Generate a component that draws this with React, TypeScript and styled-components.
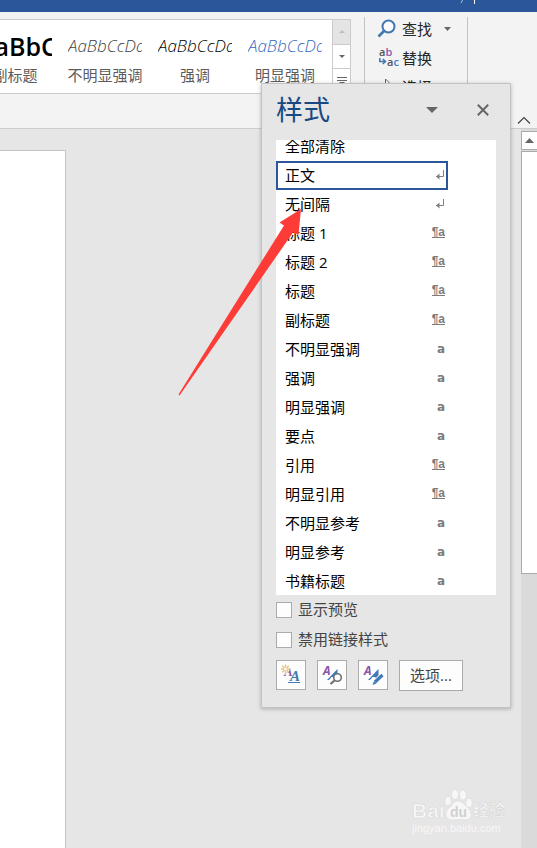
import React, { useState } from "react";
import styled, { createGlobalStyle } from "styled-components";

const uiFont = `"Open Sans", "Noto Sans CJK SC", sans-serif`;

const GlobalStyle = createGlobalStyle`
  *, *::before, *::after { box-sizing: border-box; }
  body {
    margin: 0;
    overflow: hidden;
    background: #e6e6e6;
    font-family: ${uiFont};
    font-size: 15px;
    color: #262626;
  }
  button, input { font: inherit; color: inherit; }
  button { padding: 0; border: 0; background: none; cursor: pointer; }
  svg { display: block; }
`;

const Window = styled.div`
  position: relative;
  display: flex;
  flex-direction: column;
  height: 100vh;
  overflow: hidden;
`;

const TitleBar = styled.header`
  flex: none;
  display: flex;
  justify-content: flex-end;
  height: 12px;
  padding-right: 61px;
  background: #2b579a;
`;

const Ribbon = styled.div`
  flex: none;
  display: flex;
  align-items: flex-start;
  height: 117px;
  background: #f3f3f3;
  border-bottom: 1px solid #cdcdcd;
`;

const Gallery = styled.div`
  flex: none;
  display: flex;
  justify-content: flex-end;
  width: 351px;
  height: 75px;
  margin-top: 7px;
  overflow: hidden;
  background: #fff;
  border: solid #cbcbcb;
  border-width: 1px 1px 1px 0;
`;

const GalleryItem = styled.button`
  flex: none;
  width: 90px;
  height: 73px;
  display: flex;
  flex-direction: column;
  align-items: center;
  color: #5c5c5c;
`;

const Sample = styled.span<{ $tone: string; $heading?: boolean }>`
  width: 74px;
  height: 36px;
  margin-top: 8px;
  overflow: hidden;
  white-space: nowrap;
  text-align: left;
  line-height: 36px;
  color: ${(p) => p.$tone};
  font-family: "Open Sans", sans-serif;
  font-size: ${(p) => (p.$heading ? 25 : 17)}px;
  font-weight: ${(p) => (p.$heading ? 600 : 300)};
  font-style: ${(p) => (p.$heading ? "normal" : "italic")};
`;

const SampleName = styled.span`
  line-height: 22px;
  white-space: nowrap;
`;

const GalleryScroll = styled.div`
  flex: none;
  display: flex;
  flex-direction: column;
  width: 18px;
  margin-left: 2px;
  border-left: 1px solid #cbcbcb;
`;

const ScrollStep = styled.button<{ $off?: boolean }>`
  flex: 1;
  display: grid;
  place-items: center;
  background: ${(p) => (p.$off ? "#e4e4e4" : "#fff")};
  & + & { border-top: 1px solid #cbcbcb; }
`;

const EditGroup = styled.div`
  flex: none;
  display: flex;
  flex-direction: column;
  gap: 5px;
  width: 104px;
  height: 80px;
  margin: 5px 0 0 13px;
  padding: 0 12px;
  border: solid #c3c3c3;
  border-width: 0 1px;
`;

const EditCommand = styled.button`
  display: grid;
  grid-template-columns: 25px 30px 30px;
  align-items: center;
  height: 24px;
  line-height: 24px;
  text-align: left;
  svg:last-child { justify-self: center; }
`;

const CollapseButton = styled.button`
  align-self: flex-end;
  margin: 0 6px 3px auto;
`;

const Workspace = styled.main`
  flex: 1;
  display: flex;
  justify-content: space-between;
  background: #e6e6e6;
`;

const Page = styled.div`
  width: 66px;
  margin-top: 21px;
  background: #fff;
  border: solid #c4c4c4;
  border-width: 1px 1px 0 0;
`;

const ScrollBar = styled.div`
  display: flex;
  flex-direction: column;
  width: 16px;
  padding-top: 2px;
  background: #dadada;
`;

const ScrollUp = styled.button`
  display: grid;
  place-items: center;
  height: 19px;
  background: #fff;
  border: solid #ababab;
  border-width: 1px 0 1px 1px;
`;

const Thumb = styled.div`
  height: 59%;
  margin-top: 1px;
  background: #fff;
  border: solid #ababab;
  border-width: 1px 0 1px 1px;
`;

const Pane = styled.aside`
  position: absolute;
  top: 83px;
  right: 26px;
  width: 250px;
  padding: 0 14px 16px;
  background: #e6e6e6;
  border: 1px solid #c3c3c3;
  box-shadow: 0 1px 4px rgba(0, 0, 0, 0.25);
`;

const PaneHeader = styled.div`
  display: flex;
  align-items: center;
  height: 56px;
  padding: 0 5px 4px 0;
`;

const PaneTitle = styled.h2`
  flex: 1;
  margin: 0;
  font-size: 27px;
  line-height: 40px;
  font-weight: 400;
  color: #174a84;
`;

const PaneTool = styled.button`
  display: grid;
  place-items: center;
  width: 16px;
  height: 16px;
  & + & { margin-left: 35px; }
`;

const StyleList = styled.ul`
  margin: 0;
  padding: 0;
  list-style: none;
  background: #fff;
`;

const StyleEntry = styled.li<{ $cut?: boolean }>`
  display: flex;
  align-items: flex-end;
  height: ${(p) => (p.$cut ? 21 : 29)}px;
  overflow: hidden;
  &:last-child { height: 28px; align-items: flex-start; }
`;

const StyleButton = styled.button<{ $on: boolean }>`
  flex: none;
  display: flex;
  align-items: center;
  justify-content: space-between;
  width: 172px;
  height: 29px;
  padding: 0 1px 2px 7px;
  line-height: 22px;
  text-align: left;
  color: #000;
  border: 2px solid ${(p) => (p.$on ? "#2b579a" : "transparent")};
  outline: none;
`;

const Mark = styled.span<{ $linked?: boolean }>`
  font-family: ${(p) => (p.$linked ? `"Liberation Sans"` : `"DejaVu Sans"`)}, sans-serif;
  font-weight: 700;
  color: #7c7c7c;
  font-size: 12px;
  line-height: ${(p) => (p.$linked ? 10 : 16)}px;
  border-bottom: ${(p) => (p.$linked ? "1px solid #7c7c7c" : "0")};
`;

const Check = styled.label`
  display: flex;
  align-items: center;
  gap: 6px;
  height: 30px;
  line-height: 22px;
  color: #444;
`;

const CheckText = styled.span`
  padding-bottom: 2px;
`;

const CheckBox = styled.input`
  appearance: none;
  width: 16px;
  height: 16px;
  margin: 0;
  background: #fdfdfd;
  border: 1px solid #ababab;
  &:checked { background: #2b579a; }
`;

const Actions = styled.div`
  display: flex;
  gap: 11px;
  margin-top: 5px;
`;

const ActionButton = styled.button<{ $wide?: boolean }>`
  display: grid;
  place-items: center;
  width: ${(p) => (p.$wide ? 64 : 30)}px;
  height: ${(p) => (p.$wide ? 31 : 30)}px;
  padding-bottom: ${(p) => (p.$wide ? 2 : 0)}px;
  line-height: 22px;
  background: #fdfdfd;
  border: 1px solid #ababab;
  color: #444;
`;

const Pointer = styled.svg`
  position: absolute;
  top: 209px;
  right: 235px;
  pointer-events: none;
`;

const Watermark = styled.div`
  position: absolute;
  right: 29px;
  bottom: 11px;
  width: 96px;
  opacity: 0.7;
`;

const Down = ({ w, h, fill }: { w: number; h: number; fill: string }) => (
  <svg width={w} height={h} viewBox="0 0 10 5" preserveAspectRatio="none">
    <path d="M0 0H10L5 5Z" fill={fill} />
  </svg>
);

const Up = ({ w, h, fill }: { w: number; h: number; fill: string }) => (
  <svg width={w} height={h} viewBox="0 0 10 5" preserveAspectRatio="none">
    <path d="M0 5H10L5 0Z" fill={fill} />
  </svg>
);

const SearchIcon = () => (
  <svg width="20" height="20" viewBox="0 0 20 20" fill="none" stroke="#4177ae">
    <circle cx="11.5" cy="7.5" r="6" strokeWidth="2" fill="#fafcff" />
    <path d="M7 12L1.5 17.5" strokeWidth="2.6" />
  </svg>
);

const ReplaceIcon = () => (
  <svg width="21" height="22" viewBox="0 0 21 22" fontFamily="Open Sans" fontWeight="600" fontSize="11">
    <text x="0" y="9" fill="#555">a<tspan fill="#9457ad">b</tspan></text>
    <text x="8" y="19" fill="#555">a<tspan fill="#4480bd">c</tspan></text>
    <path d="M.8 11V14.5H6M3.8 12L6.5 14.5L3.8 17" fill="none" stroke="#3b78b8" strokeWidth="1.5" />
  </svg>
);

const SelectIcon = () => (
  <svg width="20" height="20" viewBox="0 0 20 20">
    <path d="M5.500 2V16L9 12.500L11.500 18L13.500 17L11 11.500H15Z" fill="#fff" stroke="#666" />
  </svg>
);

const ReturnIcon = () => (
  <svg width="10" height="10" viewBox="0 0 10 10" fill="none" stroke="#7f7f7f">
    <path d="M8.500 0V6.500H1" />
    <path d="M4.500 3.500V9.500L1 6.500Z" fill="#7f7f7f" stroke="none" />
  </svg>
);

const NewStyleIcon = () => (
  <svg width="22" height="22" viewBox="0 0 22 22" fontFamily="Liberation Serif" fontStyle="italic" fontWeight="700">
    <text x="4" y="12" fontSize="13" fill="#8b55a8">A</text>
    <circle cx="5.500" cy="5" r="4" fill="#fdfdfd" />
    <path d="M5.500 .5V9.500M1 5H10M2.300 1.800L8.700 8.200M8.700 1.800L2.300 8.200" stroke="#ecc07c" strokeWidth="1.300" />
    <circle cx="5.500" cy="5" r="1.500" fill="#fff" />
    <text x="10" y="17" fontSize="15" fill="#3f79b6">A</text>
    <path d="M8 18.500H20" stroke="#3f79b6" />
  </svg>
);

const LetterPair = () => (
  <>
    <text x="2" y="11" fontSize="12" fill="#8b55a8">A</text>
    <path d="M6 16L16.500 5V16H13.500V13H10.500L8 16Z" fill="#3f79b6" />
  </>
);

const InspectIcon = () => (
  <svg width="22" height="22" viewBox="0 0 22 22" fontFamily="Open Sans" fontStyle="italic" fontWeight="700">
    <LetterPair />
    <circle cx="16.500" cy="13.500" r="3.800" fill="#fdfdfd" stroke="#707070" strokeWidth="1.600" />
    <path d="M13.500 16.500L9.500 20" stroke="#707070" strokeWidth="2.200" />
  </svg>
);

const ManageIcon = () => (
  <svg width="22" height="22" viewBox="0 0 22 22" fontFamily="Open Sans" fontStyle="italic" fontWeight="700">
    <LetterPair />
    <path d="M20.500 11L11.500 19.500" stroke="#fdfdfd" strokeWidth="5" />
    <path d="M20.500 11L13 18" stroke="#3f79b6" strokeWidth="3.200" />
    <path d="M12 17L10.500 21L14.500 19.500Z" fill="#3f79b6" />
  </svg>
);

const samples = [
  { text: "AaBbC", name: "副标题", tone: "#000", heading: true },
  { text: "AaBbCcDd", name: "不明显强调", tone: "#404040" },
  { text: "AaBbCcDd", name: "强调", tone: "#000" },
  { text: "AaBbCcDd", name: "明显强调", tone: "#3569c0" },
];

type Kind = "none" | "para" | "linked" | "char";

const styleRows: [string, Kind][] = [
  ["全部清除", "none"],
  ["正文", "para"],
  ["无间隔", "para"],
  ["标题 1", "linked"],
  ["标题 2", "linked"],
  ["标题", "linked"],
  ["副标题", "linked"],
  ["不明显强调", "char"],
  ["强调", "char"],
  ["明显强调", "char"],
  ["要点", "char"],
  ["引用", "linked"],
  ["明显引用", "linked"],
  ["不明显参考", "char"],
  ["明显参考", "char"],
  ["书籍标题", "char"],
];

const KindMark = ({ kind }: { kind: Kind }) => {
  if (kind === "para") return <ReturnIcon />;
  if (kind === "linked") return <Mark $linked>¶a</Mark>;
  if (kind === "char") return <Mark>a</Mark>;
  return null;
};

export default function App() {
  const [active, setActive] = useState("正文");
  return (
    <Window>
      <GlobalStyle />
      <TitleBar>
        <svg width="16" height="12" viewBox="0 0 16 12" stroke="#fff">
          <path d="M2.500 0L1 3" stroke="#a9bddb" />
          <path d="M14.500 0V4" />
        </svg>
      </TitleBar>
      <Ribbon>
        <Gallery>
          {samples.map((s) => (
            <GalleryItem key={s.name}>
              <Sample $tone={s.tone} $heading={s.heading}>{s.text}</Sample>
              <SampleName>{s.name}</SampleName>
            </GalleryItem>
          ))}
          <GalleryScroll>
            <ScrollStep $off aria-label="上一行"><Up w={6} h={3} fill="#bdbdbd" /></ScrollStep>
            <ScrollStep aria-label="下一行"><Down w={6} h={3} fill="#666" /></ScrollStep>
            <ScrollStep aria-label="其他">
              <svg width="10" height="10" viewBox="0 0 10 10">
                <path d="M0 1.500H10M0 4.500H10" stroke="#666" />
                <path d="M2 6H8L5 9Z" fill="#666" />
              </svg>
            </ScrollStep>
          </GalleryScroll>
        </Gallery>
        <EditGroup>
          <EditCommand><SearchIcon />查找<Down w={7} h={4} fill="#666" /></EditCommand>
          <EditCommand><ReplaceIcon />替换</EditCommand>
          <EditCommand><SelectIcon />选择</EditCommand>
        </EditGroup>
        <CollapseButton aria-label="折叠功能区">
          <svg width="14" height="9" viewBox="0 0 14 9">
            <path d="M1 7.500L7 1.500L13 7.500" fill="none" stroke="#444" strokeWidth="1.200" />
          </svg>
        </CollapseButton>
      </Ribbon>
      <Workspace>
        <Page />
        <ScrollBar>
          <ScrollUp aria-label="向上滚动"><Up w={9} h={5} fill="#666" /></ScrollUp>
          <Thumb />
        </ScrollBar>
      </Workspace>

      <Pane>
        <PaneHeader>
          <PaneTitle>样式</PaneTitle>
          <PaneTool aria-label="任务窗格选项"><Down w={12} h={6} fill="#666" /></PaneTool>
          <PaneTool aria-label="关闭">
            <svg width="12" height="12" viewBox="0 0 12 12">
              <path d="M.8 .8L11.200 11.200M11.200 .8L.8 11.200" stroke="#666" strokeWidth="2" />
            </svg>
          </PaneTool>
        </PaneHeader>
        <StyleList>
          {styleRows.map(([name, kind], i) => (
            <StyleEntry key={name} $cut={i === 0}>
              <StyleButton $on={name === active} aria-pressed={name === active} onClick={() => setActive(name)}>
                {name}
                <KindMark kind={kind} />
              </StyleButton>
            </StyleEntry>
          ))}
        </StyleList>
        <Check><CheckBox type="checkbox" /><CheckText>显示预览</CheckText></Check>
        <Check><CheckBox type="checkbox" /><CheckText>禁用链接样式</CheckText></Check>
        <Actions>
          <ActionButton aria-label="新建样式"><NewStyleIcon /></ActionButton>
          <ActionButton aria-label="样式检查器"><InspectIcon /></ActionButton>
          <ActionButton aria-label="管理样式"><ManageIcon /></ActionButton>
          <ActionButton $wide>选项...</ActionButton>
        </Actions>
      </Pane>

      <Pointer width="124" height="187" viewBox="0 0 124 187">
        <path d="M123 0L101.500 13.500L106 16.500L.5 185.500L1.500 186.500L115 23.500L120.500 26Z" fill="#fd3c38" />
      </Pointer>

      <Watermark>
        <svg width="96" height="48" viewBox="0 0 96 48" fill="#fff" fontFamily="Liberation Sans">
          <g fontWeight="700" stroke="#d4d4d4" strokeWidth=".6">
            <text x="0" y="29" fontSize="21">Bai</text>
            <ellipse cx="36" cy="12" rx="3.200" ry="4.500" />
            <ellipse cx="43" cy="5.500" rx="3.500" ry="5" />
            <ellipse cx="51" cy="6" rx="3.500" ry="5" />
            <ellipse cx="57" cy="14" rx="3.200" ry="4.500" />
            <path d="M46 12C41 12 41 16 37 19C32 23 33 31 40 31C44 31 48 30 53 31C60 31 61 24 56 19C52 16 51 12 46 12Z" />
            <text x="38" y="28" fontSize="14" fill="#c8c8c8" stroke="none">du</text>
            <text x="61" y="27" fontSize="16" fontFamily="Noto Sans CJK SC">经验</text>
          </g>
          <text x="0" y="43" fontSize="11">jingyan.baidu.com</text>
        </svg>
      </Watermark>
    </Window>
  );
}
